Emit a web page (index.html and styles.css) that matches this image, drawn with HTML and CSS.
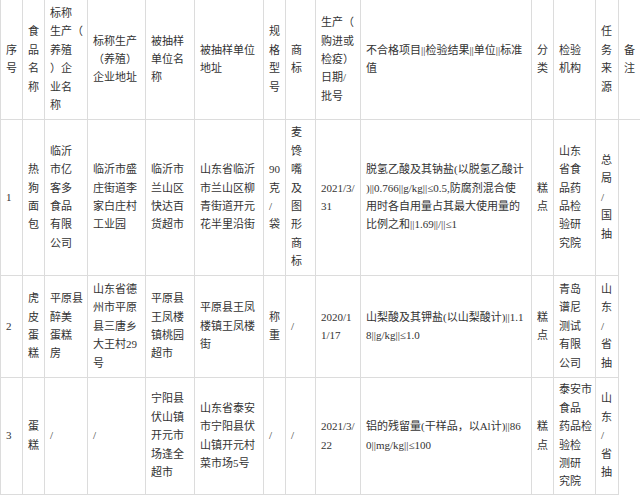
FILE: index.html
```html
<!DOCTYPE html>
<html lang="zh-CN">
<head>
<meta charset="utf-8">
<title>不合格食品抽检信息</title>
<link rel="stylesheet" href="styles.css">
</head>
<body>
<table class="report">
  <colgroup>
    <col class="w-no"><col class="w-food"><col class="w-maker"><col class="w-makeraddr">
    <col class="w-shop"><col class="w-shopaddr"><col class="w-spec"><col class="w-brand">
    <col class="w-date"><col class="w-item"><col class="w-cat"><col class="w-lab">
    <col class="w-src"><col class="w-note">
  </colgroup>
  <thead>
    <tr class="row-head">
      <th>序<br>号</th>
      <th>食<br>品<br>名<br>称</th>
      <th>标称<br>生产（<br>养殖<br>）企<br>业名<br>称</th>
      <th>标称生产<br>（养殖）<br>企业地址</th>
      <th>被抽样<br>单位名<br>称</th>
      <th>被抽样单位<br>地址</th>
      <th>规<br>格<br>型<br>号</th>
      <th>商<br>标</th>
      <th>生产（<br>购进或<br>检疫）<br>日期/<br>批号</th>
      <th>不合格项目||检验结果||单位||标准<br>值</th>
      <th>分<br>类</th>
      <th>检验<br>机构</th>
      <th>任<br>务<br>来<br>源</th>
      <th>备<br>注</th>
    </tr>
  </thead>
  <tbody>
    <tr class="row-1">
      <td>1</td>
      <td>热<br>狗<br>面<br>包</td>
      <td>临沂<br>市亿<br>客多<br>食品<br>有限<br>公司</td>
      <td>临沂市盛<br>庄街道李<br>家白庄村<br>工业园</td>
      <td>临沂市<br>兰山区<br>快达百<br>货超市</td>
      <td>山东省临沂<br>市兰山区柳<br>青街道开元<br>花半里沿街</td>
      <td>90<br>克<br>/<br>袋</td>
      <td>麦<br>馋<br>嘴<br>及<br>图<br>形<br>商<br>标</td>
      <td>2021/3/<br>31</td>
      <td>脱氢乙酸及其钠盐(以脱氢乙酸计<br>)||0.766||g/kg||≤0.5,防腐剂混合使<br>用时各自用量占其最大使用量的<br>比例之和||1.69||/||≤1</td>
      <td>糕<br>点</td>
      <td>山东<br>省食<br>品药<br>品检<br>验研<br>究院</td>
      <td>总<br>局<br>/<br>国<br>抽</td>
    </tr>
    <tr class="row-2">
      <td>2</td>
      <td>虎<br>皮<br>蛋<br>糕</td>
      <td>平原县<br>醉美<br>蛋糕<br>房</td>
      <td>山东省德<br>州市平原<br>县三唐乡<br>大王村29<br>号</td>
      <td>平原县<br>王凤楼<br>镇桃园<br>超市</td>
      <td>平原县王凤<br>楼镇王凤楼<br>街</td>
      <td>称<br>重</td>
      <td>/</td>
      <td>2020/1<br>1/17</td>
      <td>山梨酸及其钾盐(以山梨酸计)||1.1<br>8||g/kg||≤1.0</td>
      <td>糕<br>点</td>
      <td>青岛<br>谱尼<br>测试<br>有限<br>公司</td>
      <td>山<br>东<br>/<br>省<br>抽</td>
    </tr>
    <tr class="row-3">
      <td>3</td>
      <td>蛋<br>糕</td>
      <td>/</td>
      <td>/</td>
      <td>宁阳县<br>伏山镇<br>开元市<br>场逢全<br>超市</td>
      <td>山东省泰安<br>市宁阳县伏<br>山镇开元村<br>菜市场5号</td>
      <td>/</td>
      <td>/</td>
      <td>2021/3/<br>22</td>
      <td>铝的残留量(干样品，以Al计)||86<br>0||mg/kg||≤100</td>
      <td>糕<br>点</td>
      <td>泰安市<br>食品<br>药品检<br>验检<br>测研<br>究院</td>
      <td>山<br>东<br>/<br>省<br>抽</td>
    </tr>
  </tbody>
</table>
</body>
</html>
```

FILE: styles.css
```css
html, body {
  margin: 0;
  padding: 0;
  background: #ffffff;
}

.report {
  width: 640px;
  table-layout: fixed;
  border-collapse: collapse;
  font-family: "Liberation Serif", "Noto Sans CJK SC", serif;
  font-size: 11px;
  line-height: 18.4px;
  color: #333333;
}

.report th,
.report td {
  border: 1px solid #dcdcdc;
  padding: 0 0 0 5px;
  font-weight: normal;
  text-align: left;
  vertical-align: middle;
  white-space: nowrap;
  overflow: visible;
}

.report thead th {
  border-top: none;
}

.row-head { height: 119px; }
.row-1 { height: 156px; }
.row-2 { height: 102px; }
.row-3 { height: 117px; }

.w-no { width: 22px; }
.w-food { width: 22px; }
.w-maker { width: 43px; }
.w-makeraddr { width: 58px; }
.w-shop { width: 49px; }
.w-shopaddr { width: 69px; }
.w-spec { width: 22px; }
.w-brand { width: 30px; }
.w-date { width: 45px; }
.w-item { width: 171px; }
.w-cat { width: 22px; }
.w-lab { width: 42px; }
.w-src { width: 23px; }
.w-note { width: 22px; }
```
